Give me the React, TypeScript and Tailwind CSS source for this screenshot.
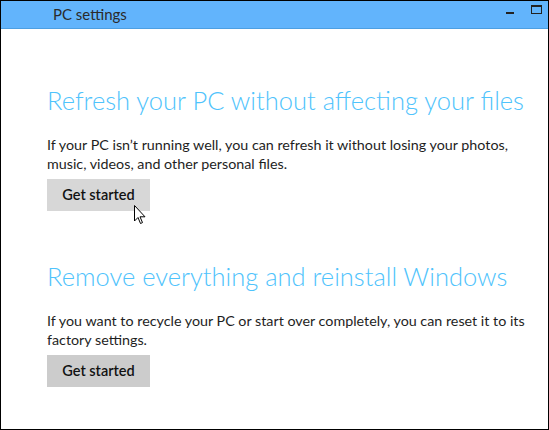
import React from "react";

function Cursor() {
  return (
    <svg width="12" height="20" viewBox="0 0 12 20" className="absolute left-[87px] top-[26px]">
      <path
        d="M0.5 0.5 L0.5 16 L4 12.5 L6.5 18.5 L8.5 17.6 L6 11.8 L11 11.8 Z"
        fill="#fff"
        stroke="#000"
        strokeWidth="1"
        strokeLinejoin="miter"
      />
    </svg>
  );
}

function Section(props: {
  title: string;
  text: React.ReactNode;
  hovered?: boolean;
  className?: string;
}) {
  return (
    <section className={props.className}>
      <h2 className="whitespace-nowrap text-[25.5px] font-light leading-[32px] text-[#4fc3fc]">
        {props.title}
      </h2>
      <p className="whitespace-nowrap mt-[19px] text-[14.3px] leading-[19px] text-[#1e1e1e]">
        {props.text}
      </p>
      <div className="relative mt-[6px] w-[103px]">
        <button
          type="button"
          className={
            "h-[32px] w-[103px] text-[14.5px] font-semibold text-[#111] " +
            (props.hovered ? "bg-[#d7d7d7]" : "bg-[#cccccc]")
          }
        >
          Get started
        </button>
        {props.hovered && <Cursor />}
      </div>
    </section>
  );
}

export default function App() {
  return (
    <main
      className="w-[549px] h-[430px] border border-black bg-white flex flex-col overflow-hidden"
      style={{ fontFamily: 'Lato, "Open Sans", sans-serif' }}
    >
      <header className="h-[28px] shrink-0 bg-[#62b4fc] border-b border-[#4d9fe2] flex items-center">
        <span className="ml-[52px] text-[15px] text-[#2b2b2b] leading-none -mt-[1px]">
          PC settings
        </span>
        <div className="ml-auto flex items-start h-full">
          <span className="mt-[11px] mr-[17px] block w-[8px] h-[2px] bg-[#222]" />
          <span className="mt-[4px] mr-[6px] block w-[11px] h-[9px] border border-[#222] border-t-[2px]" />
        </div>
      </header>
      <div className="px-[46px]">
        <Section
          className="mt-[55px]"
          title="Refresh your PC without affecting your files"
          hovered
          text={
            <>
              If your PC isn’t running well, you can refresh it without losing your photos,
              <br />
              music, videos, and other personal files.
            </>
          }
        />
        <Section
          className="mt-[49px]"
          title="Remove everything and reinstall Windows"
          text={
            <>
              If you want to recycle your PC or start over completely, you can reset it to its
              <br />
              factory settings.
            </>
          }
        />
      </div>
    </main>
  );
}
